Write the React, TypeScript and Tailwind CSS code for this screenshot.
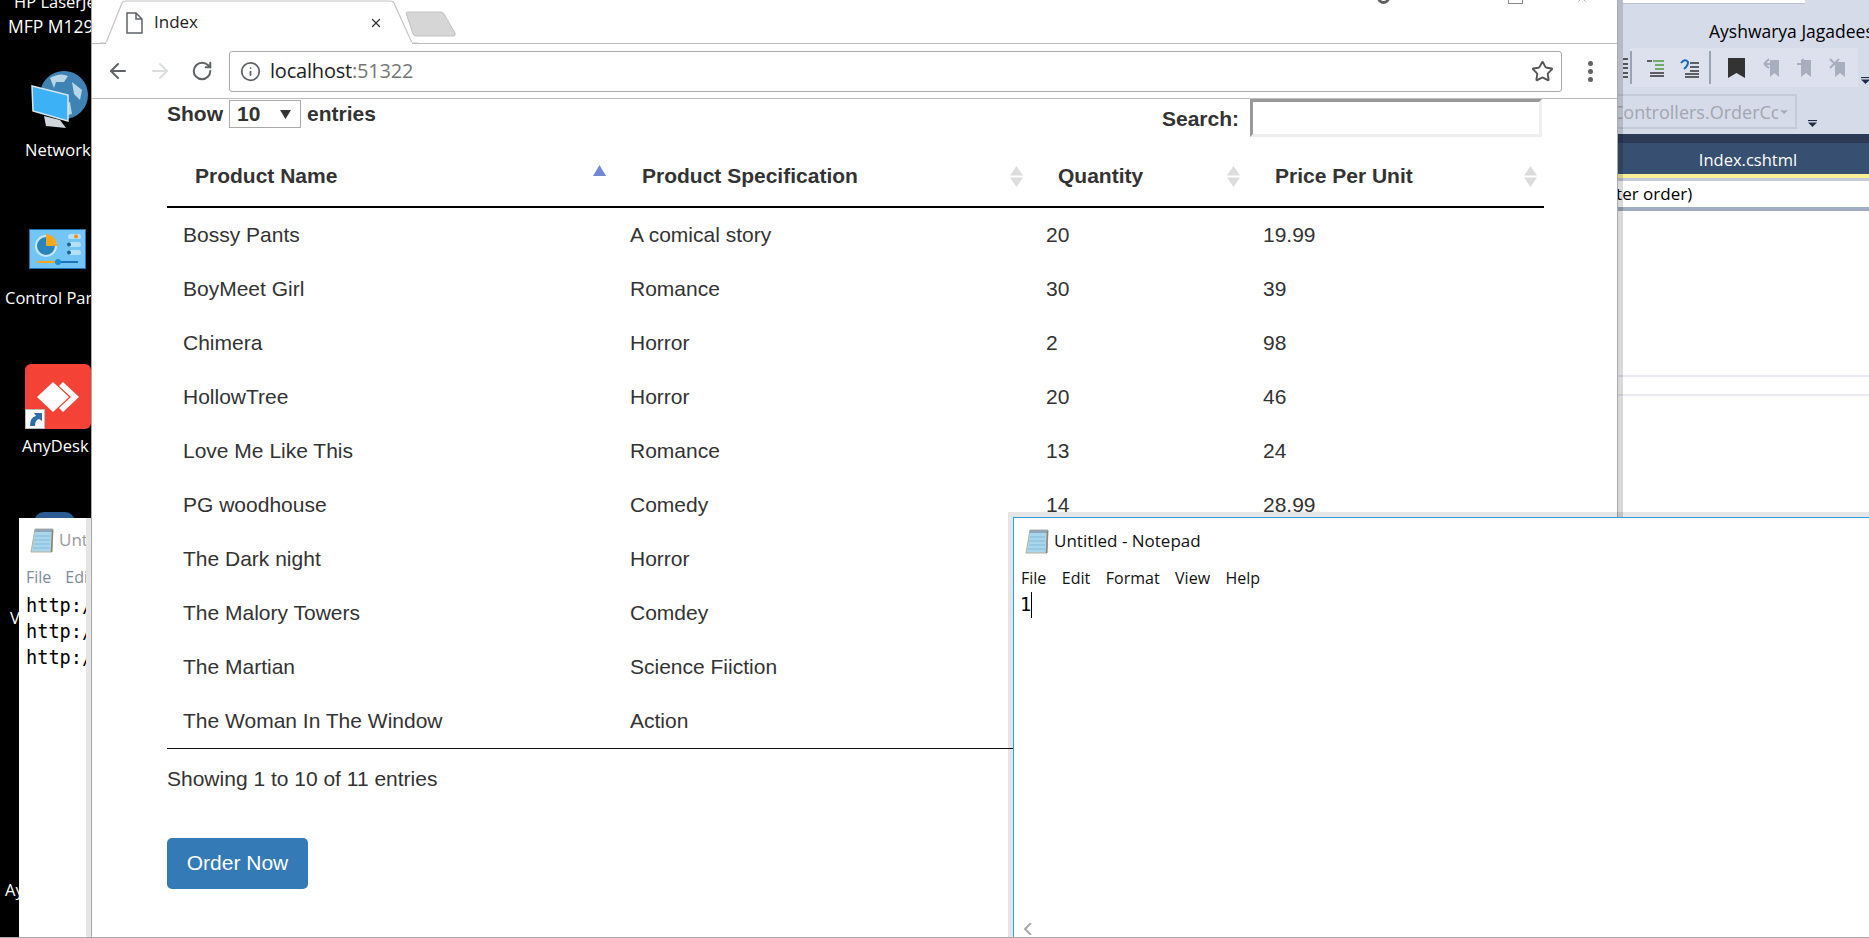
import { ArrowLeft, ArrowRight, ChevronDown, Info, RotateCw, Star, X } from 'lucide-react';

const rows = [
  ['Bossy Pants', 'A comical story', '20', '19.99'],
  ['BoyMeet Girl', 'Romance', '30', '39'],
  ['Chimera', 'Horror', '2', '98'],
  ['HollowTree', 'Horror', '20', '46'],
  ['Love Me Like This', 'Romance', '13', '24'],
  ['PG woodhouse', 'Comedy', '14', '28.99'],
  ['The Dark night', 'Horror', '', ''],
  ['The Malory Towers', 'Comdey', '', ''],
  ['The Martian', 'Science Fiiction', '', ''],
  ['The Woman In The Window', 'Action', '', ''],
];

const headers = [
  { label: 'Product Name', width: 'w-[447px]', active: true },
  { label: 'Product Specification', width: 'w-[416px]', active: false },
  { label: 'Quantity', width: 'w-[217px]', active: false },
  { label: 'Price Per Unit', width: 'w-[297px]', active: false },
];

function SortIcon({ active }: { active: boolean }) {
  if (active) {
    return (
      <svg className="absolute right-[8px] top-[19px]" width="13" height="11" viewBox="0 0 13 11">
        <path d="M6.5 0 L13 11 L0 11 Z" fill="#7288d4" />
      </svg>
    );
  }
  return (
    <svg className="absolute right-[7px] top-[20px]" width="13" height="21" viewBox="0 0 13 21">
      <path d="M6.5 0 L13 9.5 L0 9.5 Z M0 11.5 L13 11.5 L6.5 21 Z" fill="#dcdcdc" />
    </svg>
  );
}

function NotepadIcon() {
  return (
    <svg className="shrink-0" width="24" height="26" viewBox="0 0 24 26">
      <path d="M5 2 L23 2 L22 25 L1 25 Z" fill="#a9d6ec" stroke="#b9b09a" strokeWidth="1" />
      <path d="M5 2 L23 2 L23 5 L4.5 5 Z" fill="#8fa6b8" />
      <path d="M5 9 L20 9 M4 13 L20 13 M4 17 L20 17 M3 21 L20 21" stroke="#8ec3de" strokeWidth="1.5" />
      <path d="M22.5 3 L21.5 25" stroke="#8d8471" strokeWidth="1.5" />
    </svg>
  );
}

function Overflow({ className }: { className: string }) {
  return (
    <svg className={`absolute ${className}`} width="9" height="7" viewBox="0 0 9 7">
      <path d="M0 0.5 H9" stroke="#1e2d48" strokeWidth="1.2" />
      <path d="M0 2.5 H9 L4.5 7 Z" fill="#1e2d48" />
    </svg>
  );
}

function DesktopLabel({ text, className }: { text: string; className: string }) {
  return (
    <div className={`absolute whitespace-nowrap text-white leading-[20px] font-['Open_Sans',sans-serif] ${className}`}>
      {text}
    </div>
  );
}

function Desktop() {
  return (
    <>
      <DesktopLabel text="HP LaserJet" className="left-[14px] top-[-8px] text-[16.5px]" />
      <DesktopLabel text="MFP M129" className="left-[8px] top-[16px] text-[17.5px]" />
      <svg className="absolute left-[30px] top-[70px]" width="58" height="60" viewBox="0 0 58 60">
        <circle cx="34" cy="25" r="24" fill="#3f83b5" />
        <path d="M20 8 Q30 2 38 6 L34 12 L26 12 L24 18 Z M42 12 L52 20 L50 30 L44 24 Z M30 34 L40 32 L42 44 L34 46 Z" fill="#b7d6e6" />
        <path d="M2 16 L38 25 L38 51 L3 41 Z" fill="#3db1f5" stroke="#d8e6ee" strokeWidth="1.5" />
        <path d="M14 46 L30 50 L36 58 L16 56 Z" fill="#cfd6dc" />
      </svg>
      <DesktopLabel text="Network" className="left-[25px] top-[140px] text-[16.5px]" />
      <svg className="absolute left-[29px] top-[229px]" width="57" height="40" viewBox="0 0 57 40">
        <rect x="0.5" y="0.5" width="56" height="39" fill="#73c5f6" stroke="#1d72b8" />
        <circle cx="17" cy="17" r="10" fill="#2a83bd" stroke="#c8e8fa" strokeWidth="2" />
        <path d="M17 5 A12 12 0 0 1 28 17 L17 17 Z" fill="#f5a81c" />
        <rect x="39" y="5" width="13" height="5" rx="2.5" fill="#b6e0f8" />
        <rect x="39" y="13" width="13" height="5" rx="2.5" fill="#b6e0f8" />
        <rect x="39" y="21" width="13" height="5" rx="2.5" fill="#b6e0f8" />
        <circle cx="47" cy="7.5" r="2" fill="#ef8a1c" />
        <circle cx="40" cy="15.5" r="2" fill="#15619c" />
        <circle cx="40" cy="23.5" r="2" fill="#15619c" />
        <path d="M8 33 H28" stroke="#f5a81c" strokeWidth="2" />
        <path d="M28 33 H49" stroke="#1d72b8" strokeWidth="2" />
        <circle cx="29" cy="33" r="3" fill="#1d8fd8" />
      </svg>
      <DesktopLabel text="Control Panel" className="left-[5px] top-[288px] text-[16.5px]" />
      <div className="absolute left-[25px] top-[364px] w-[66px] h-[65px] rounded-[6px] bg-[#f44336]">
        <svg width="66" height="65" viewBox="0 0 66 65">
          <path d="M28 18 L44 33 L28 48 L12 33 Z" fill="#fff" />
          <path d="M38 18 L54 33 L38 48 L34 44 L46 33 L34 22 Z" fill="#fff" />
        </svg>
      </div>
      <div className="absolute left-[25px] top-[409px] w-[20px] h-[20px] bg-white border border-[#bbb] flex items-center justify-center">
        <svg width="16" height="16" viewBox="0 0 16 16">
          <path d="M3 15 Q3 6 9 5 L7 2 L15 2 L15 10 L12 8 Q8 9 8 15 Z" fill="#2f6ea8" />
        </svg>
      </div>
      <DesktopLabel text="AnyDesk" className="left-[22px] top-[436px] text-[16.5px]" />
      <div className="absolute left-[34px] top-[512px] w-[41px] h-[10px] rounded-t-full bg-[#2d5c93]" />
      <DesktopLabel text="V" className="left-[10px] top-[608px] text-[16.5px]" />
      <DesktopLabel text="Ay" className="left-[5px] top-[880px] text-[16.5px]" />
    </>
  );
}

function LeftNotepad() {
  return (
    <div className="absolute left-[19px] top-[518px] w-[72px] h-[420px] bg-white overflow-hidden border-r-[5px] border-r-[#e5e5e5]">
      <div className="flex items-center gap-[5px] pl-[11px] h-[44px] whitespace-nowrap">
        <NotepadIcon />
        <span className="text-[17px] text-[#9a9a9a] font-['Open_Sans',sans-serif]">Untitled</span>
      </div>
      <div className="pl-[7px] pt-[2px] flex gap-[14px] h-[28px] items-center text-[16px] text-[#7f8a99] whitespace-nowrap font-['Open_Sans',sans-serif]">
        <span>File</span>
        <span>Edit</span>
      </div>
      <div className="pl-[7px] pt-[3px] font-['DejaVu_Sans_Mono',monospace] text-[18.6px] leading-[26px] text-black whitespace-nowrap">
        <div>http://</div>
        <div>http://</div>
        <div>http://</div>
      </div>
    </div>
  );
}

function VisualStudio() {
  return (
    <div className="absolute left-[1618px] top-0 w-[251px] h-[518px] bg-white flex flex-col overflow-hidden font-['Open_Sans',sans-serif]">
      <div className="h-[134px] bg-[#d6dbe9] relative shrink-0">
        <div className="absolute left-[5px] top-0 w-[182px] h-[4px] bg-white border-b border-[#b9c0d0]" />
        <div className="absolute left-[91px] top-[20px] text-[17.5px] leading-[22px] text-black whitespace-nowrap">Ayshwarya Jagadees</div>
        <div className="absolute left-[5px] top-[58px] w-[5px] h-[20px] flex flex-col justify-between">
          <div className="h-[2px] bg-[#555]" />
          <div className="h-[2px] bg-[#555]" />
          <div className="h-[2px] bg-[#555]" />
          <div className="h-[2px] bg-[#555]" />
          <div className="h-[2px] bg-[#555]" />
        </div>
        <div className="absolute left-[12px] top-[48px] w-[228px] h-[39px] bg-[#dde1ed] flex items-center">
          <div className="w-[2px] h-[33px] bg-[#9aa3b5]" />
          <svg className="ml-[15px]" width="18" height="20" viewBox="0 0 18 20">
            <path d="M6 3 H17 M8 7 H17 M8 11 H17" stroke="#4c9a3c" strokeWidth="1.5" />
            <path d="M0 3 H5 M3 15 H17 M3 18 H17" stroke="#333" strokeWidth="1.5" />
          </svg>
          <svg className="ml-[15px]" width="20" height="20" viewBox="0 0 20 20">
            <path d="M1 5 Q5 0 8 4 Q8 8 4 11" fill="none" stroke="#1668b5" strokeWidth="2" />
            <path d="M10 5 H19 M10 9 H19 M10 13 H19 M5 16 H19 M5 19 H19" stroke="#333" strokeWidth="1.4" />
          </svg>
          <div className="ml-[9px] w-[2px] h-[33px] bg-[#9aa3b5]" />
          <svg className="ml-[17px]" width="18" height="20" viewBox="0 0 18 20">
            <path d="M0 0 H17 V20 L8.5 15 L0 20 Z" fill="#333" />
          </svg>
          <svg className="ml-[17px]" width="17" height="20" viewBox="0 0 17 20">
            <path d="M7 2 H16 V19 L11.5 15 L7 19 Z" fill="#a7aebd" />
            <path d="M1 6 L6 1 M1 6 L6 10 M1 6 H11" stroke="#a7aebd" strokeWidth="2" fill="none" />
          </svg>
          <svg className="ml-[16px]" width="17" height="20" viewBox="0 0 17 20">
            <path d="M5 2 H15 V19 L10 15 L5 19 Z" fill="#a7aebd" />
            <path d="M11 6 L6 1 M11 6 L6 10 M1 6 H11" stroke="#a7aebd" strokeWidth="2" fill="none" />
          </svg>
          <svg className="ml-[16px]" width="17" height="20" viewBox="0 0 17 20">
            <path d="M6 4 H16 V19 L11 15 L6 19 Z" fill="#a7aebd" />
            <path d="M1 1 L10 10 M10 1 L1 10" stroke="#a7aebd" strokeWidth="2" />
          </svg>
        </div>
        <Overflow className="left-[243px] top-[77px]" />
        <div className="absolute left-0 top-[94px] w-[179px] h-[35px] border-[2px] border-l-0 border-[#c5cad9] flex items-center overflow-hidden">
          <div className="w-[160px] shrink-0 overflow-hidden pt-[1px]">
            <span className="block -ml-[6px] text-[18px] text-[#a2a6b0] whitespace-nowrap">Controllers.OrderController</span>
          </div>
          <ChevronDown size={12} fill="#a2a6b0" stroke="#a2a6b0" />
        </div>
        <Overflow className="left-[190px] top-[120px]" />
      </div>
      <div className="h-[9px] bg-[#2c3a55] shrink-0" />
      <div className="h-[31px] bg-[#374f70] flex items-center justify-center shrink-0 pl-[9px] pt-[4px]">
        <span className="text-[16.5px] text-white whitespace-nowrap">Index.cshtml</span>
      </div>
      <div className="h-[4px] bg-[#fdf09b] shrink-0" />
      <div className="h-[3px] bg-[#c5cbd8] shrink-0" />
      <div className="h-[26px] shrink-0 text-[17px] leading-[26px] text-black whitespace-nowrap overflow-hidden">
        <span className="-ml-[10px] inline-block">ster order)</span>
      </div>
      <div className="h-[4px] bg-[#a0aec0] shrink-0" />
      <div className="h-[164px] shrink-0" />
      <div className="h-[2px] bg-[#e8e9f1] shrink-0" />
      <div className="h-[17px] shrink-0" />
      <div className="h-[2px] bg-[#e8e9f1] shrink-0" />
      <div className="absolute left-0 top-0 w-[5px] h-full bg-black/15" />
    </div>
  );
}

function Browser() {
  return (
    <div className="absolute left-[91px] top-0 w-[1527px] h-[938px] bg-white border-l border-r border-[#a9a9a9] flex flex-col overflow-hidden">
      <div className="h-[44px] shrink-0 relative border-b border-[#bcbcbc]">
        <svg className="absolute left-[6px] top-0" width="320" height="44" viewBox="0 0 320 44">
          <path d="M2 43 H8 L24 3 Q25 1 28 1 H292 Q295 1 296 3 L314 43 H320" fill="#fff" stroke="#c4c4c4" strokeWidth="1.2" />
          <path d="M8 43 H314" stroke="#fff" strokeWidth="2" />
        </svg>
        <svg className="absolute left-[313px] top-[11px]" width="52" height="26" viewBox="0 0 52 26">
          <path d="M1 2 Q1 1 3 1 H36 Q38 1 39 3 L50 22 Q51 25 48 25 H11 Q9 25 8 23 Z" fill="#d6d6d6" stroke="#c2c2c2" />
        </svg>
        <svg className="absolute left-[33px] top-[12px]" width="18" height="22" viewBox="0 0 18 22">
          <path d="M2 1 H11 L17 7 V21 H2 Z M11 1 V7 H17" fill="none" stroke="#5f6368" strokeWidth="1.5" />
        </svg>
        <span className="absolute left-[62px] top-[11px] text-[17px] leading-[22px] text-[#222] font-['Open_Sans',sans-serif]">Index</span>
        <X className="absolute left-[277px] top-[16px] text-[#333]" size={14} strokeWidth={2.2} />
        <div className="absolute left-[1285px] top-[-9px] w-[13px] h-[13px] rounded-full border-[3px] border-[#5f5f5f]" />
        <div className="absolute left-[1416px] top-[-10px] w-[15px] h-[14px] border border-[#888]" />
        <X className="absolute left-[1483px] top-[-9px] text-[#888]" size={14} strokeWidth={1} />
      </div>
      <div className="h-[55px] shrink-0 flex items-center border-b border-[#bcbcbc] pl-[14px]">
        <ArrowLeft className="text-[#5f6368]" size={24} strokeWidth={2} />
        <ArrowRight className="ml-[18px] text-[#dadce0]" size={24} strokeWidth={2} />
        <RotateCw className="ml-[19px] text-[#5f6368]" size={22} strokeWidth={2.2} />
        <div className="ml-[16px] w-[1333px] h-[41px] border border-[#aaaaaa] rounded-[3px] flex items-center pl-[10px] pr-[7px]">
          <Info className="text-[#5f6368]" size={21} strokeWidth={2} />
          <div className="ml-[9px] text-[20px] text-[#222] font-['Open_Sans',sans-serif] tracking-[-0.2px]">
            localhost<span className="text-[#777]">:51322</span>
          </div>
          <Star className="ml-auto text-[#555]" size={23} strokeWidth={2} />
        </div>
        <div className="ml-[26px] flex flex-col gap-[3px]">
          <div className="w-[5px] h-[5px] rounded-full bg-[#5f6368]" />
          <div className="w-[5px] h-[5px] rounded-full bg-[#5f6368]" />
          <div className="w-[5px] h-[5px] rounded-full bg-[#5f6368]" />
        </div>
      </div>
      <div className="flex-1 pl-[75px] pr-[72px] font-['Liberation_Sans',sans-serif] text-[21px] text-[#333]">
        <div className="h-[47px] flex items-start justify-between font-bold">
          <div className="flex items-center h-[29px] pt-[1px]">
            <span>Show</span>
            <div className="ml-[6px] w-[72px] h-[28px] border border-[#aaa] flex items-center justify-between pl-[7px] pr-[9px]">
              <span>10</span>
              <svg width="11" height="9" viewBox="0 0 11 9">
                <path d="M0 0 H11 L5.5 9 Z" fill="#333" />
              </svg>
            </div>
            <span className="ml-[6px]">entries</span>
          </div>
          <div className="flex items-center">
            <span className="pt-[1px]">Search:</span>
            <input
              readOnly
              className="ml-[11px] w-[292px] h-[38px] border-[3px] border-t-[#999] border-l-[#999] border-r-[#eee] border-b-[#eee] bg-white mr-[3px]"
            />
          </div>
        </div>
        <table className="w-[1377px] table-fixed">
          <thead>
            <tr className="h-[61px] border-b-2 border-black">
              {headers.map((h) => (
                <th key={h.label} className={`relative text-left font-bold pl-[28px] ${h.width}`}>
                  {h.label}
                  <SortIcon active={h.active} />
                </th>
              ))}
            </tr>
          </thead>
          <tbody className="border-b border-[#111]">
            {rows.map((r, n) => (
              <tr key={r[0]} className={n === 0 ? 'h-[55px]' : 'h-[54px]'}>
                {r.map((cell, i) => (
                  <td key={i} className="pl-[16px]">
                    {cell}
                  </td>
                ))}
              </tr>
            ))}
          </tbody>
        </table>
        <div className="mt-[17px] leading-[26px]">Showing 1 to 10 of 11 entries</div>
        <button className="mt-[46px] w-[141px] h-[51px] rounded-[5px] bg-[#337ab7] text-white text-[21px]">Order Now</button>
      </div>
    </div>
  );
}

function Notepad() {
  return (
    <div className="absolute left-[1008px] top-[512px] w-[861px] h-[426px] bg-black/10 pl-[5px] pt-[5px]">
      <div className="h-full bg-white border-l border-t border-[#2aa1e2] relative font-['Open_Sans',sans-serif] text-[#111]">
        <div className="flex items-center gap-[5px] pl-[11px] h-[43px] pt-[2px]">
          <NotepadIcon />
          <span className="text-[17px]">Untitled - Notepad</span>
        </div>
        <div className="flex gap-[15.5px] pl-[7px] h-[28px] items-center text-[16px] pt-[5px]">
          <span>File</span>
          <span>Edit</span>
          <span>Format</span>
          <span>View</span>
          <span>Help</span>
        </div>
        <div className="pl-[6px] pt-[3px] h-[29px] flex items-center font-['DejaVu_Sans_Mono',monospace] text-[18.6px] text-black">
          <span>1</span>
          <span className="w-px h-[26px] bg-black" />
        </div>
        <svg className="absolute left-[9px] bottom-[3px]" width="9" height="12" viewBox="0 0 9 12">
          <path d="M8 0 L2 6 L8 12" fill="none" stroke="#aaa" strokeWidth="2" />
        </svg>
      </div>
    </div>
  );
}

export default function App() {
  return (
    <div className="relative w-[1869px] h-[938px] bg-black overflow-hidden">
      <Desktop />
      <LeftNotepad />
      <VisualStudio />
      <Browser />
      <Notepad />
      <div className="absolute left-0 bottom-0 w-full h-px bg-[#aaa]" />
    </div>
  );
}
